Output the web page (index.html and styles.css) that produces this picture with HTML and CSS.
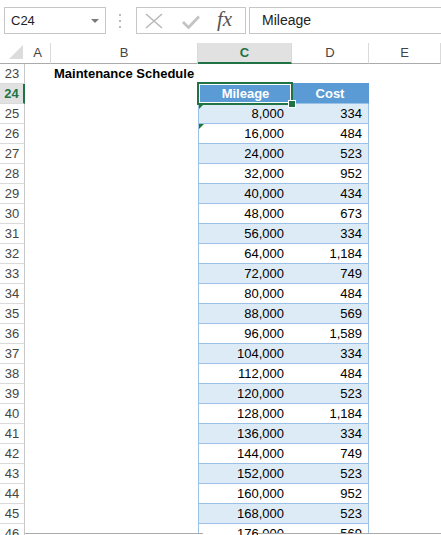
FILE: index.html
```html
<!DOCTYPE html>
<html>
<head>
<meta charset="utf-8">
<link rel="stylesheet" href="styles.css">
</head>
<body>
<div class="fbar">
  <div class="namebox"><span>C24</span><span class="ddarrow"></span></div>
  <div class="dots"><i></i><i></i><i></i></div>
  <div class="fnbox">
    <svg class="ic-x" width="18" height="16" viewBox="0 0 18 16"><path d="M1 1 L17 15 M17 1 L1 15" stroke="#b9b9b9" stroke-width="1.6" fill="none"/></svg>
    <svg class="ic-ok" width="18" height="14" viewBox="0 0 18 14"><path d="M1 7 L6.5 12.5 L17 1.5" stroke="#c3c3c3" stroke-width="2.8" fill="none"/></svg>
    <span class="fx">fx</span>
  </div>
  <div class="formula">Mileage</div>
</div>

<div class="colheads">
  <div class="ch corner"><svg width="25" height="20" viewBox="0 0 25 20"><polygon points="23,2 23,16 9,16" fill="#dcdcdc"/></svg></div>
  <div class="ch">A</div>
  <div class="ch">B</div>
  <div class="ch sel">C</div>
  <div class="ch">D</div>
  <div class="ch">E</div>
</div>

<div class="sheet">
  <div class="row"><div class="rh">23</div><div class="c"></div><div class="c title">Maintenance Schedule</div><div class="c tc top"></div><div class="c td top"></div><div class="c"></div></div>
  <div class="row"><div class="rh rsel">24</div><div class="c"></div><div class="c"></div><div class="c tc th">Mileage</div><div class="c td th">Cost</div><div class="c"></div></div>
  <div class="row"><div class="rh">25</div><div class="c"></div><div class="c"></div><div class="c tc alt"><span class="tri"></span>8,000</div><div class="c td alt">334</div><div class="c"></div></div>
  <div class="row"><div class="rh">26</div><div class="c"></div><div class="c"></div><div class="c tc"><span class="tri"></span>16,000</div><div class="c td">484</div><div class="c"></div></div>
  <div class="row"><div class="rh">27</div><div class="c"></div><div class="c"></div><div class="c tc alt">24,000</div><div class="c td alt">523</div><div class="c"></div></div>
  <div class="row"><div class="rh">28</div><div class="c"></div><div class="c"></div><div class="c tc">32,000</div><div class="c td">952</div><div class="c"></div></div>
  <div class="row"><div class="rh">29</div><div class="c"></div><div class="c"></div><div class="c tc alt">40,000</div><div class="c td alt">434</div><div class="c"></div></div>
  <div class="row"><div class="rh">30</div><div class="c"></div><div class="c"></div><div class="c tc">48,000</div><div class="c td">673</div><div class="c"></div></div>
  <div class="row"><div class="rh">31</div><div class="c"></div><div class="c"></div><div class="c tc alt">56,000</div><div class="c td alt">334</div><div class="c"></div></div>
  <div class="row"><div class="rh">32</div><div class="c"></div><div class="c"></div><div class="c tc">64,000</div><div class="c td">1,184</div><div class="c"></div></div>
  <div class="row"><div class="rh">33</div><div class="c"></div><div class="c"></div><div class="c tc alt">72,000</div><div class="c td alt">749</div><div class="c"></div></div>
  <div class="row"><div class="rh">34</div><div class="c"></div><div class="c"></div><div class="c tc">80,000</div><div class="c td">484</div><div class="c"></div></div>
  <div class="row"><div class="rh">35</div><div class="c"></div><div class="c"></div><div class="c tc alt">88,000</div><div class="c td alt">569</div><div class="c"></div></div>
  <div class="row"><div class="rh">36</div><div class="c"></div><div class="c"></div><div class="c tc">96,000</div><div class="c td">1,589</div><div class="c"></div></div>
  <div class="row"><div class="rh">37</div><div class="c"></div><div class="c"></div><div class="c tc alt">104,000</div><div class="c td alt">334</div><div class="c"></div></div>
  <div class="row"><div class="rh">38</div><div class="c"></div><div class="c"></div><div class="c tc">112,000</div><div class="c td">484</div><div class="c"></div></div>
  <div class="row"><div class="rh">39</div><div class="c"></div><div class="c"></div><div class="c tc alt">120,000</div><div class="c td alt">523</div><div class="c"></div></div>
  <div class="row"><div class="rh">40</div><div class="c"></div><div class="c"></div><div class="c tc">128,000</div><div class="c td">1,184</div><div class="c"></div></div>
  <div class="row"><div class="rh">41</div><div class="c"></div><div class="c"></div><div class="c tc alt">136,000</div><div class="c td alt">334</div><div class="c"></div></div>
  <div class="row"><div class="rh">42</div><div class="c"></div><div class="c"></div><div class="c tc">144,000</div><div class="c td">749</div><div class="c"></div></div>
  <div class="row"><div class="rh">43</div><div class="c"></div><div class="c"></div><div class="c tc alt">152,000</div><div class="c td alt">523</div><div class="c"></div></div>
  <div class="row"><div class="rh">44</div><div class="c"></div><div class="c"></div><div class="c tc">160,000</div><div class="c td">952</div><div class="c"></div></div>
  <div class="row"><div class="rh">45</div><div class="c"></div><div class="c"></div><div class="c tc alt">168,000</div><div class="c td alt">523</div><div class="c"></div></div>
  <div class="row"><div class="rh">46</div><div class="c"></div><div class="c"></div><div class="c tc">176,000</div><div class="c td">569</div><div class="c"></div></div>
</div>

<div class="active"></div>
<div class="handle"></div>
<div class="hs hs1"></div>
<div class="hs hs2"></div>
</body>
</html>
```
FILE: styles.css
```css
html, body {
  margin: 0;
  padding: 0;
}
body {
  width: 441px;
  height: 535px;
  overflow: hidden;
  position: relative;
  background: #fff;
  font-family: "Liberation Sans", Arial, sans-serif;
  color: #000;
}

/* formula bar */
.fbar {
  height: 43px;
  box-sizing: border-box;
  padding-top: 7px;
  display: flex;
  align-items: flex-start;
}
.namebox {
  margin-left: 4px;
  width: 102px;
  height: 27px;
  box-sizing: border-box;
  border: 1px solid #c6c6c6;
  display: flex;
  align-items: center;
  padding-left: 6px;
  font-size: 13px;
  color: #222;
}
.ddarrow {
  margin-left: auto;
  margin-right: 6px;
  width: 0;
  height: 0;
  border-left: 4px solid transparent;
  border-right: 4px solid transparent;
  border-top: 4px solid #7a7a7a;
}
.dots {
  margin-left: 13px;
  margin-top: 7px;
  display: flex;
  flex-direction: column;
  gap: 4px;
}
.dots i {
  display: block;
  width: 2px;
  height: 2px;
  background: #b8b8b8;
}
.fnbox {
  margin-left: 15px;
  width: 110px;
  height: 27px;
  box-sizing: border-box;
  border: 1px solid #c6c6c6;
  display: flex;
  align-items: center;
}
.ic-x {
  margin-left: 8px;
}
.ic-ok {
  margin-left: 19px;
  margin-top: 2px;
}
.fx {
  margin-left: 17px;
  font-family: "Liberation Serif", "Times New Roman", serif;
  font-style: italic;
  font-size: 21px;
  color: #555;
  line-height: 1;
  margin-top: -2px;
}
.formula {
  margin-left: 3px;
  flex: 1;
  height: 27px;
  box-sizing: border-box;
  border: 1px solid #c6c6c6;
  border-right: none;
  padding-left: 12px;
  font-size: 14px;
  line-height: 25px;
  color: #222;
}

/* column headers */
.colheads {
  display: grid;
  grid-template-columns: 25px 26px 147px 94px 77px 72px;
  height: 21px;
}
.ch {
  box-sizing: border-box;
  border-right: 1px solid #dadada;
  border-bottom: 1px solid #ababab;
  font-size: 13px;
  color: #444;
  text-align: center;
  line-height: 20px;
}
.ch.corner {
  border-right: none;
}
.ch.corner svg {
  display: block;
}
.ch.sel {
  background: #e1e1e1;
  color: #217346;
  font-weight: bold;
  border-bottom: 2px solid #217346;
  line-height: 19px;
}

/* grid rows */
.row {
  display: grid;
  grid-template-columns: 25px 26px 147px 94px 77px 72px;
  height: 20px;
}
.rh {
  box-sizing: border-box;
  border-bottom: 1px solid #dadada;
  border-right: 1px solid #c8c8c8;
  font-size: 13px;
  color: #444;
  text-align: center;
  line-height: 19px;
}
.rh.rsel {
  background: #e1e1e1;
  color: #217346;
  font-weight: bold;
  border-right: 2px solid #217346;
}
.c {
  box-sizing: border-box;
  font-size: 13px;
  line-height: 19px;
  white-space: nowrap;
  position: relative;
}
.c.title {
  font-weight: bold;
  padding-left: 3px;
  line-height: 20px;
}
.tc, .td {
  border-bottom: 1px solid #9bc2e6;
  text-align: right;
}
.tc {
  border-left: 1px solid #9bc2e6;
  padding-right: 8px;
}
.td {
  border-right: 1px solid #9bc2e6;
  padding-right: 6px;
}
.tc.top, .td.top {
  border: none;
  border-bottom: 1px solid #5b9bd5;
}
.th {
  background: #5b9bd5;
  color: #fff;
  font-weight: bold;
  text-align: center;
  padding-right: 0;
  border-left-color: #5b9bd5;
  border-right-color: #5b9bd5;
}
.alt {
  background: #ddebf7;
}
.tri {
  position: absolute;
  left: 0;
  top: 0;
  width: 0;
  height: 0;
  border-top: 5px solid #1e7b34;
  border-right: 5px solid transparent;
}

/* overlays */
.active {
  position: absolute;
  left: 197px;
  top: 82px;
  width: 96px;
  height: 23px;
  box-sizing: border-box;
  border: 2px solid #217346;
  box-shadow: inset 0 0 0 1px #fff;
}
.handle {
  position: absolute;
  left: 288px;
  top: 100px;
  width: 6px;
  height: 6px;
  background: #217346;
  border: 1px solid #fff;
}
.hs {
  position: absolute;
  top: 533px;
  height: 2px;
  box-sizing: border-box;
  border-top: 1px solid #ababab;
  background: #fff;
}
.hs1 {
  left: 25px;
  width: 178px;
}
.hs2 {
  left: 258px;
  width: 183px;
}
```
